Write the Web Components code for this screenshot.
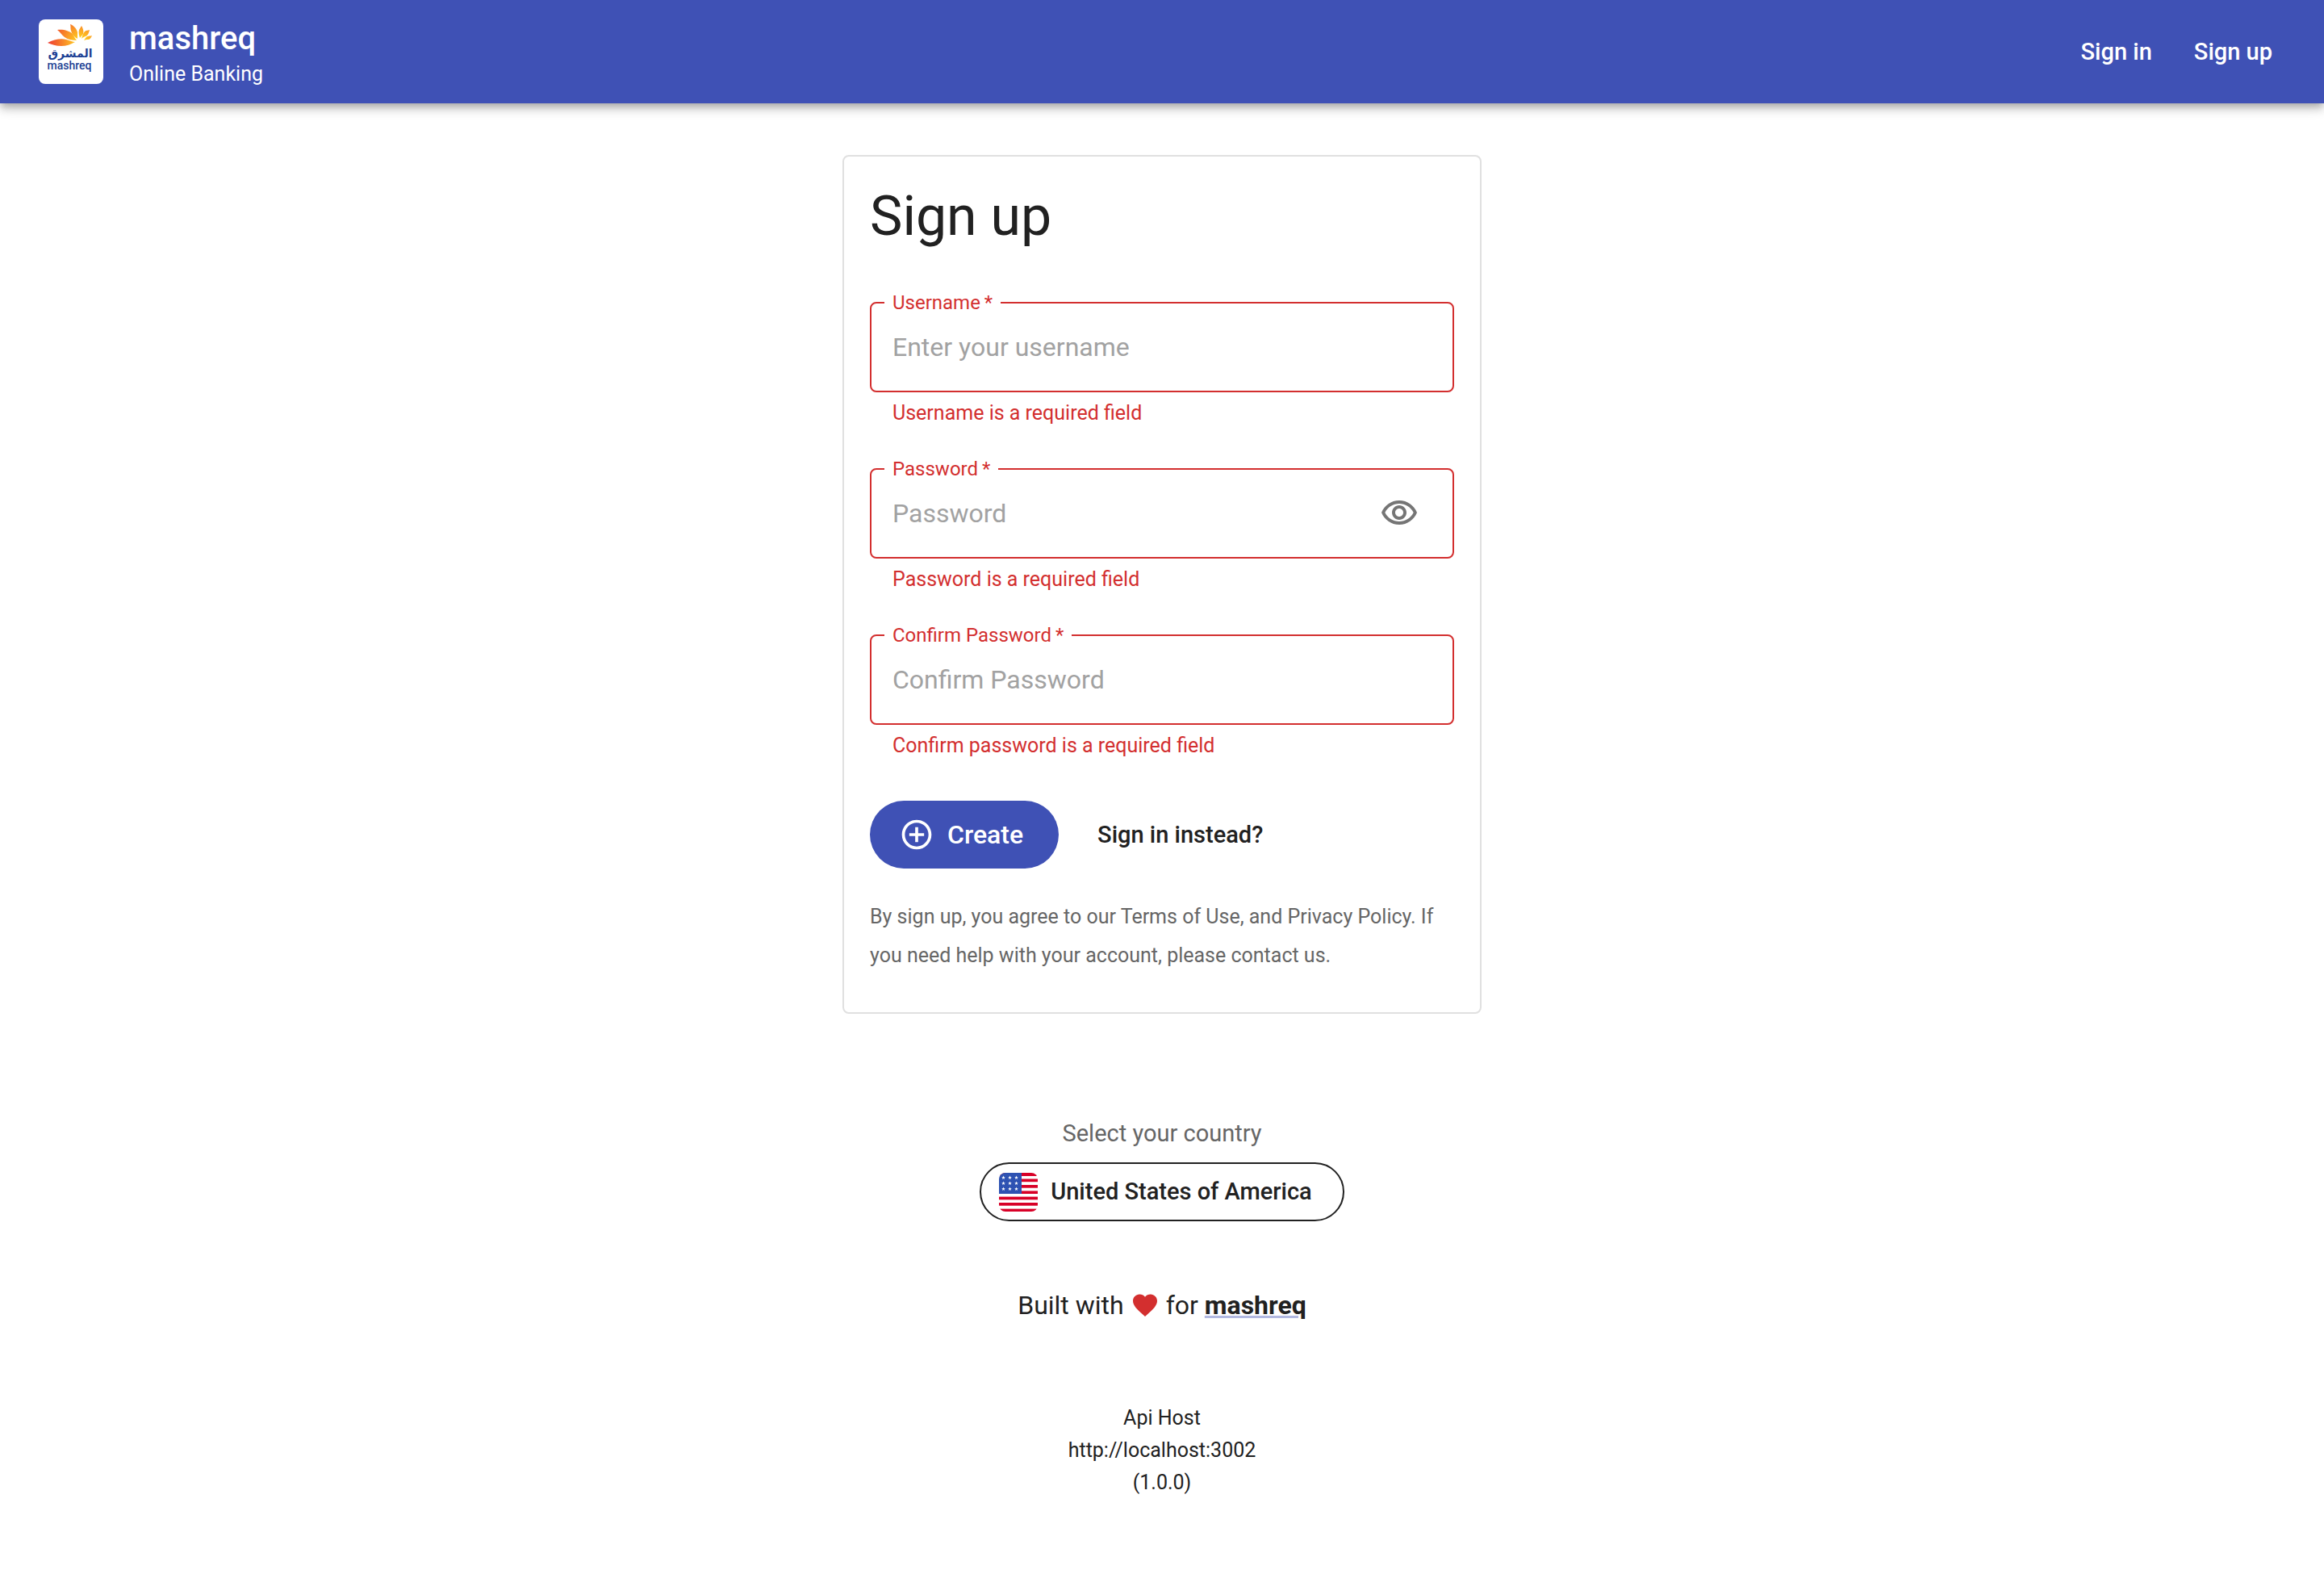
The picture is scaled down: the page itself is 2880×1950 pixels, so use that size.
<!DOCTYPE html>
<html lang="en">
<head>
<meta charset="utf-8">
<title>mashreq Online Banking</title>
<style>
  :root {
    --primary: #3f51b5;
    --error: #d32f2f;
    --text: #212121;
    --muted: #666666;
    --size-label: 24px;
    --size-small: 25px;
    --size-body: 29px;
    --size-large: 32px;
  }
  body {
    margin: 0;
    background: #ffffff;
    color: var(--text);
    font-family: Roboto, "Liberation Sans", sans-serif;
    font-size: var(--size-large);
  }
</style>
</head>
<body>
<bank-page></bank-page>

<script>
  const define = (name, html, setup) => {
    const template = document.createElement('template');
    template.innerHTML = html;
    customElements.define(name, class extends HTMLElement {
      connectedCallback() {
        if (this.shadowRoot) return;
        this.attachShadow({ mode: 'open' }).append(template.content.cloneNode(true));
        if (setup) setup(this, this.shadowRoot);
      }
    });
  };

  define('bank-logo', `
    <style>
      :host { display: block; width: 80px; height: 80px; }
      svg { display: block; width: 100%; height: 100%; }
      text { fill: #1c3f94; }
    </style>
    <svg viewBox="0 0 80 80" role="img" aria-label="mashreq logo">
      <defs>
        <radialGradient id="sun" gradientUnits="userSpaceOnUse" cx="52" cy="28" r="40">
          <stop offset="0.1" stop-color="#ffd21c"/>
          <stop offset="0.4" stop-color="#fba026"/>
          <stop offset="0.75" stop-color="#f4662c"/>
          <stop offset="1" stop-color="#ee4035"/>
        </radialGradient>
      </defs>
      <rect width="80" height="80" rx="8" fill="#fff"/>
      <g fill="url(#sun)">
        <path d="M11 29C18 25 28 23 34 25C39 26 42 28 45 28C40 31 34 33 28 33C21 33 16 31 11 29Z"/>
        <path d="M23 13C30 12 38 14 42 18C44 21 45 24 47 26C42 26 36 25 32 22C28 19 27 16 23 13Z"/>
        <path d="M39 6C44 8 47 12 48 16C48 19 48 22 48 24C44 22 41 18 40 14C39 11 40 9 39 6Z"/>
        <path d="M53 8C55 11 56 15 55 18C54 20 52 21 51 23C50 20 49 16 50 13C51 11 52 10 53 8Z"/>
        <path d="M63 13C62 17 61 20 58 21C56 22 55 22 53 24C54 20 55 17 57 15C59 13 61 14 63 13Z"/>
        <path d="M66 20C65 23 63 25 61 25C59 25 58 25 56 26C58 23 59 21 61 21C63 20 64 21 66 20Z"/>
      </g>
      <text x="39" y="47" font-family="DejaVu Sans, sans-serif" font-weight="700" font-size="14" text-anchor="middle" direction="rtl">المشرق</text>
      <text x="38" y="62" font-family="Roboto, sans-serif" font-weight="500" font-size="14" text-anchor="middle">mashreq</text>
    </svg>`);

  define('nav-link', `
    <style>
      :host { display: block; }
      a { display: block; padding: 16px; color: #fff; font-size: var(--size-body); line-height: 48px; font-weight: 500; text-decoration: none; }
    </style>
    <a href="#"><slot></slot></a>`);

  define('bank-header', `
    <style>
      :host { display: block; position: relative; background: var(--primary); color: #fff;
        box-shadow: 0 4px 8px -2px rgba(0,0,0,.2), 0 8px 10px 0 rgba(0,0,0,.14), 0 2px 20px 0 rgba(0,0,0,.12); }
      header { display: flex; align-items: center; min-height: 128px; padding: 0 48px; box-sizing: border-box; }
      .brand { display: flex; flex-direction: column; margin-left: 32px; padding-top: 8px; }
      strong { font-size: 40px; line-height: 48px; font-weight: 500; }
      span { font-size: var(--size-small); line-height: 40px; }
      nav { display: flex; gap: 20px; margin-left: auto; }
    </style>
    <header>
      <bank-logo></bank-logo>
      <div class="brand"><strong>mashreq</strong><span>Online Banking</span></div>
      <nav><nav-link>Sign in</nav-link><nav-link>Sign up</nav-link></nav>
    </header>`);

  define('text-field', `
    <style>
      :host { display: block; }
      .box { position: relative; display: flex; align-items: center; height: 112px; box-sizing: border-box; border: 2px solid var(--error); border-radius: 8px; }
      label { position: absolute; left: 16px; top: -15px; padding: 0 10px; background: #fff; color: var(--error); font-size: var(--size-label); line-height: 28px; }
      input { flex: 1; min-width: 0; height: 100%; padding: 0 26px; box-sizing: border-box; border: 0; outline: 0; background: none; color: var(--text); font: inherit; }
      input::placeholder { color: #a2a2a2; opacity: 1; }
      p { margin: 6px 28px 0; color: var(--error); font-size: var(--size-small); line-height: 40px; }
    </style>
    <div class="box"><input id="field"><slot></slot><label for="field"></label></div>
    <p id="help"></p>`,
    (host, root) => {
      const input = root.querySelector('input');
      input.type = host.getAttribute('type') || 'text';
      input.placeholder = host.getAttribute('placeholder');
      input.required = true;
      input.setAttribute('aria-describedby', 'help');
      root.querySelector('label').textContent = host.getAttribute('label') + '\u2009*';
      root.querySelector('p').textContent = host.getAttribute('error');
    });

  define('reveal-button', `
    <style>
      :host { display: block; margin-right: 26px; }
      button { display: block; padding: 16px; border: 0; border-radius: 50%; background: none; color: #757575; }
      svg { display: block; width: 48px; height: 48px; fill: currentColor; }
    </style>
    <button type="button" aria-label="Show password">
      <svg viewBox="0 0 24 24"><path d="M12 6c3.79 0 7.17 2.13 8.82 5.5C19.17 14.87 15.79 17 12 17s-7.17-2.13-8.82-5.5C4.83 8.13 8.21 6 12 6m0-2C7 4 2.73 7.11 1 11.5 2.73 15.89 7 19 12 19s9.27-3.11 11-7.5C21.27 7.11 17 4 12 4zm0 5c1.38 0 2.5 1.12 2.5 2.5S13.38 14 12 14s-2.5-1.12-2.5-2.5S10.62 9 12 9m0-2c-2.48 0-4.5 2.02-4.5 4.5S9.52 16 12 16s4.5-2.02 4.5-4.5S14.48 7 12 7z"/></svg>
    </button>`);

  define('signup-card', `
    <style>
      :host { display: block; width: 100%; max-width: 792px; box-sizing: border-box; padding: 32px; border: 2px solid #e0e0e0; border-radius: 8px; }
      h1 { margin: 0 0 64px; font-size: 68px; line-height: 84px; font-weight: 400; }
      form { display: flex; flex-direction: column; gap: 48px; }
      .actions { display: flex; align-items: center; gap: 48px; }
      button { display: flex; align-items: center; gap: 16px; padding: 16px 44px 16px 36px; border: 0; border-radius: 42px; background: var(--primary); color: #fff; font: inherit; font-weight: 500; line-height: 52px; }
      svg { display: block; width: 44px; height: 44px; fill: currentColor; }
      a { color: var(--text); font-size: var(--size-body); font-weight: 500; text-decoration: none; }
      p { margin: 36px 0 14px; color: var(--muted); font-size: var(--size-small); line-height: 48px; }
    </style>
    <h1>Sign up</h1>
    <form>
      <text-field label="Username" placeholder="Enter your username" error="Username is a required field"></text-field>
      <text-field type="password" label="Password" placeholder="Password" error="Password is a required field"><reveal-button></reveal-button></text-field>
      <text-field type="password" label="Confirm Password" placeholder="Confirm Password" error="Confirm password is a required field"></text-field>
      <div class="actions">
        <button type="button"><svg viewBox="0 0 24 24" aria-hidden="true"><path d="M13 7h-2v4H7v2h4v4h2v-4h4v-2h-4V7zm-1-5C6.48 2 2 6.48 2 12s4.48 10 10 10 10-4.48 10-10S17.52 2 12 2zm0 18c-4.41 0-8-3.59-8-8s3.59-8 8-8 8 3.59 8 8-3.59 8-8 8z"/></svg>Create</button>
        <a href="#">Sign in instead?</a>
      </div>
    </form>
    <p>By sign up, you agree to our Terms of Use, and Privacy Policy. If you need help with your account, please contact us.</p>`);

  define('us-flag', `
    <style>
      :host { display: block; width: 48px; height: 48px; border-radius: 8px; overflow: hidden; }
      svg { display: block; width: 100%; height: 100%; }
    </style>
    <svg viewBox="0 0 48 48" aria-hidden="true">
      <defs><path id="star" d="M0-2.4L.65-.8 2.3-.75 1 .35 1.45 2 0 1.05-1.45 2-1 .35-2.3-.75-.65-.8Z" fill="#fff"/></defs>
      <rect width="48" height="48" fill="#fff"/>
      <g fill="#d80027">
        <rect y="0" width="48" height="4"/><rect y="7.5" width="48" height="3.7"/><rect y="15" width="48" height="3.7"/><rect y="22.4" width="48" height="3.6"/>
        <rect y="29.6" width="48" height="3.7"/><rect y="37" width="48" height="3.7"/><rect y="44.6" width="48" height="3.4"/>
      </g>
      <rect width="28" height="26" fill="#2e52b2"/>
      <g>
        <use href="#star" x="5.5" y="6"/><use href="#star" x="13.5" y="6"/><use href="#star" x="21.5" y="6"/>
        <use href="#star" x="5.5" y="13"/><use href="#star" x="13.5" y="13"/><use href="#star" x="21.5" y="13"/>
        <use href="#star" x="5.5" y="20"/><use href="#star" x="13.5" y="20"/><use href="#star" x="21.5" y="20"/>
      </g>
    </svg>`);

  define('country-picker', `
    <style>
      :host { display: flex; flex-direction: column; align-items: center; gap: 16px; }
      span { color: var(--muted); font-size: var(--size-body); line-height: 40px; }
      button { display: flex; align-items: center; gap: 16px; padding: 10px 38px 10px 22px; border: 2px solid var(--text); border-radius: 37px; background: #fff; color: var(--text); font: inherit; font-size: var(--size-body); font-weight: 500; line-height: 49px; }
    </style>
    <span id="caption">Select your country</span>
    <button type="button" aria-describedby="caption"><us-flag></us-flag>United States of America</button>`);

  define('bank-footer', `
    <style>
      :host { display: block; padding: 128px 0 64px; }
      footer { display: flex; flex-direction: column; align-items: center; text-align: center; }
      .built { display: flex; align-items: center; gap: 8px; margin: 80px 0 96px; line-height: 48px; }
      svg { display: block; width: 36px; height: 36px; fill: var(--error); }
      a { color: var(--text); font-weight: 700; text-decoration: underline; text-decoration-color: #b2b9e1; }
      .host { font-size: var(--size-small); line-height: 40px; }
    </style>
    <footer>
      <country-picker></country-picker>
      <div class="built">
        <span>Built with</span>
        <svg viewBox="0 0 24 24" aria-label="love"><path d="m12 21.35-1.45-1.32C5.4 15.36 2 12.28 2 8.5 2 5.42 4.42 3 7.5 3c1.74 0 3.41.81 4.5 2.09C13.09 3.81 14.76 3 16.5 3 19.58 3 22 5.42 22 8.5c0 3.78-3.4 6.86-8.55 11.54L12 21.35z"/></svg>
        <span>for <a href="#">mashreq</a></span>
      </div>
      <div class="host">Api Host<br>http://localhost:3002<br>(1.0.0)</div>
    </footer>`);

  define('bank-page', `
    <style>
      :host { display: block; }
      main { display: flex; flex-direction: column; align-items: center; padding: 64px 32px 0; }
    </style>
    <bank-header></bank-header>
    <main><signup-card></signup-card></main>
    <bank-footer></bank-footer>`);
</script>
</body>
</html>
